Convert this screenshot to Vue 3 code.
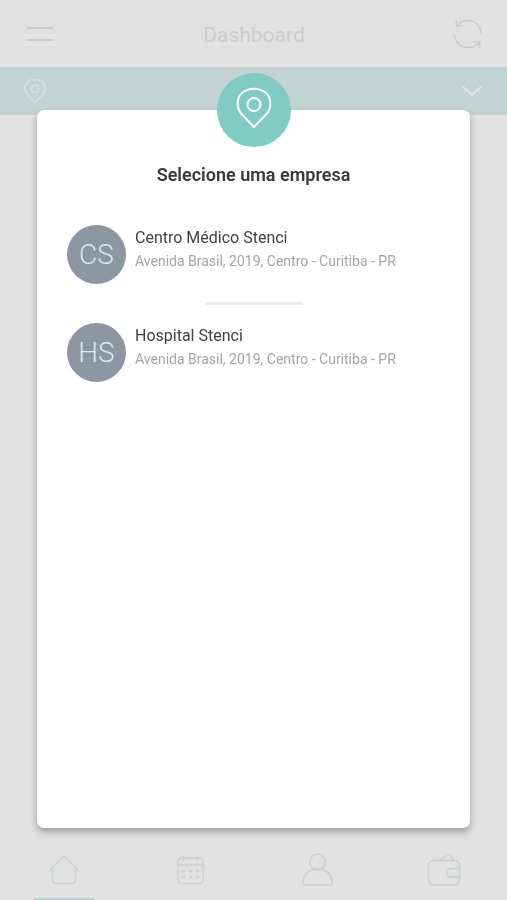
<script setup>
import { ref } from 'vue'

const companies = [
  { initials: 'CS', name: 'Centro Médico Stenci', address: 'Avenida Brasil, 2019, Centro - Curitiba - PR' },
  { initials: 'HS', name: 'Hospital Stenci', address: 'Avenida Brasil, 2019, Centro - Curitiba - PR' },
]
const selected = ref(null)
</script>

<template>
  <div class="screen">
    <header class="topbar">
      <button class="icon-button" type="button" aria-label="Menu">
        <svg width="30" height="18" viewBox="0 0 30 18">
          <path d="M2 3H28M2 15H28" />
        </svg>
      </button>
      <h1 class="page-title">Dashboard</h1>
      <button class="icon-button" type="button" aria-label="Atualizar">
        <svg class="line-icon" width="30" height="30" viewBox="0 0 30 30">
          <path d="M4 6.500C6.500 3.300 10.500 1.500 15 1.500C22.500 1.500 28 7.500 28.300 15" />
          <path d="M3.200 2L3.500 7L9 6.800" />
          <path d="M26 23.500C23.500 26.700 19.500 28.500 15 28.500C7.500 28.500 1.800 22.500 1.500 15.500" />
          <path d="M20.500 23L27 22.500L26.500 28" />
        </svg>
      </button>
    </header>

    <button class="company-bar" type="button" aria-label="Selecionar empresa">
      <svg class="pin" width="22" height="26" viewBox="0 0 36 42">
        <path d="M18 40L6 27.500C-.5 20.500 1 10.500 6 6C12.500 .300 23.500 .300 30 6C35 10.500 36.500 20.500 30 27.500Z" />
        <circle cx="18" cy="18" r="6" />
      </svg>
      <svg width="22" height="14" viewBox="0 0 22 14">
        <path class="chevron" d="M2 3L11 11L20 3" />
      </svg>
    </button>

    <main class="content"></main>

    <nav class="tabs">
      <a class="tab active" href="#inicio" aria-label="Início">
        <svg width="34" height="34" viewBox="0 0 34 34">
          <path d="M2 18L17 3.500L32 18" />
          <path d="M5.500 15V27Q5.500 30.500 9 30.500H25Q28.500 30.500 28.500 27V15" />
        </svg>
      </a>
      <a class="tab" href="#agenda" aria-label="Agenda">
        <svg width="34" height="34" viewBox="0 0 34 34">
          <rect x="4" y="5" width="25" height="25.500" rx="3.500" />
          <path d="M4 12H29M9.500 3.500V7.500M23.500 3.500V7.500" />
          <path class="dots" d="M9.500 18H9.600M16.500 18H16.600M23.500 18H23.600M9.500 24H9.600M16.500 24H16.600M23.500 24H23.600" />
        </svg>
      </a>
      <a class="tab" href="#perfil" aria-label="Perfil">
        <svg width="34" height="34" viewBox="0 0 34 34">
          <ellipse cx="17.500" cy="9" rx="7.500" ry="8" />
          <path d="M12.500 16.500C6.500 19 3 23.500 3 29Q3 32 5.500 32H29.500Q32 32 32 29C32 23.500 28.500 19 22.500 16.500Q17.500 15.500 12.500 16.500" />
        </svg>
      </a>
      <a class="tab" href="#carteira" aria-label="Carteira">
        <svg width="34" height="34" viewBox="0 0 34 34">
          <rect x="1.500" y="7.500" width="31" height="24.500" rx="5.500" />
          <path d="M11 7.500L21.500 2Q23 1.500 24 3L27 7.500" />
          <path d="M32.500 15.500H24.500Q20 15.500 20 19.800Q20 24 24.500 24H32.500" />
        </svg>
      </a>
    </nav>

    <div class="overlay">
      <section class="dialog" role="dialog" aria-modal="true" aria-labelledby="dialog-title">
        <div class="badge">
          <svg width="36" height="42" viewBox="0 0 36 42">
            <path d="M18 40L6 27.500C-.5 20.500 1 10.500 6 6C12.500 .300 23.500 .300 30 6C35 10.500 36.500 20.500 30 27.500Z" />
            <circle cx="18" cy="17.500" r="6.500" />
          </svg>
        </div>
        <h2 id="dialog-title" class="dialog-title">Selecione uma empresa</h2>
        <ul class="companies">
          <li v-for="company in companies" :key="company.initials" class="company-item">
            <button class="company" type="button" @click="selected = company.initials">
              <span class="avatar">{{ company.initials }}</span>
              <span class="details">
                <span class="name">{{ company.name }}</span>
                <span class="address">{{ company.address }}</span>
              </span>
            </button>
          </li>
        </ul>
      </section>
    </div>
  </div>
</template>

<style>
body {
  background: #e1e1e1;
}
</style>

<style scoped>
.screen {
  display: flex;
  flex-direction: column;
  min-height: 100vh;
  background: #e1e1e1;
  font-family: Roboto, "Noto Sans", sans-serif;
}

button {
  padding: 0;
  border: 0;
  background: none;
  color: inherit;
  font: inherit;
  cursor: pointer;
}

svg {
  display: block;
  fill: none;
  stroke: currentColor;
  stroke-width: 2;
  stroke-linecap: round;
  stroke-linejoin: round;
}

.topbar {
  display: flex;
  align-items: center;
  justify-content: space-between;
  height: 67px;
  padding: 0 24px 0 25px;
  color: #cacdce;
}

.line-icon {
  stroke-width: 1.5;
}

.page-title {
  margin: 0;
  padding-top: 2px;
  font-size: 21px;
  font-weight: 400;
  line-height: 28px;
}

.company-bar {
  display: flex;
  align-items: center;
  justify-content: space-between;
  height: 48px;
  padding: 0 24px;
  background: #c2d4d1;
  color: #d3dfdd;
}

.pin {
  stroke-width: 3;
}

.chevron {
  stroke: #e1e5e4;
}

.content {
  flex: 1;
}

.tabs {
  display: grid;
  grid-template-columns: repeat(4, 1fr);
  height: 60px;
  padding-left: 1px;
  color: #cdd1d1;
}

.tab {
  display: flex;
  align-items: center;
  justify-content: center;
  padding-top: 2px;
  border-bottom: 2px solid transparent;
  color: inherit;
}

.tab svg {
  stroke-width: 1.5;
}

.tab .dots {
  stroke-width: 3;
}

.tab.active {
  width: 60px;
  justify-self: center;
  border-color: #bdd1ce;
  color: #c6d6d3;
}

.overlay {
  position: fixed;
  inset: 0;
  display: flex;
  padding: 110px 37px 72px;
}

.dialog {
  flex: 1;
  display: flex;
  flex-direction: column;
  align-items: center;
  border-radius: 7px;
  background: #fff;
  box-shadow: 0 4px 7px rgba(0, 0, 0, 0.3);
}

.badge {
  display: flex;
  align-items: center;
  justify-content: center;
  width: 74px;
  height: 74px;
  margin-top: -37px;
  padding-bottom: 4px;
  box-sizing: border-box;
  border-radius: 50%;
  background: #80cbc4;
  color: #fff;
}

.dialog-title {
  margin: 16px 0 38px;
  color: #37393f;
  font-size: 18px;
  font-weight: 600;
  line-height: 24px;
}

.companies {
  align-self: stretch;
  margin: 0;
  padding: 0 30px;
  list-style: none;
}

.company-item + .company-item::before {
  content: "";
  display: block;
  width: 98px;
  height: 3px;
  margin: 18px auto;
  border-radius: 2px;
  background: #ececec;
}

.company {
  display: flex;
  align-items: flex-start;
  gap: 9px;
  width: 100%;
  text-align: left;
}

.avatar {
  flex: none;
  width: 59px;
  border-radius: 50%;
  background: #8c97a4;
  color: #dce5f0;
  font-size: 28px;
  font-weight: 300;
  line-height: 59px;
  text-align: center;
}

.details {
  display: flex;
  flex-direction: column;
  padding-top: 1px;
}

.name {
  color: #404145;
  font-size: 16px;
  line-height: 24px;
}

.address {
  color: #a1a6ad;
  font-size: 14px;
  line-height: 22px;
}
</style>
